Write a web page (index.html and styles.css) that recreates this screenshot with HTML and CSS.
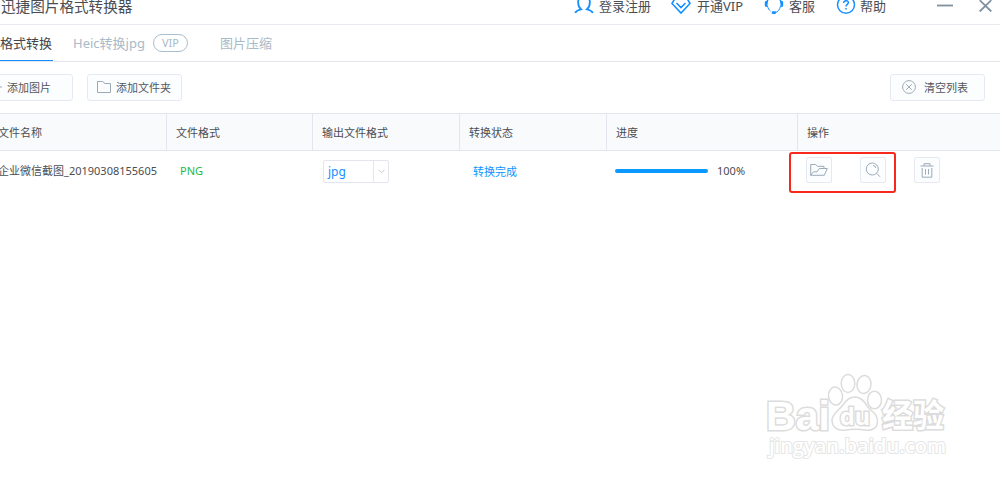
FILE: index.html
```html
<!DOCTYPE html>
<html lang="zh-CN">
<head>
<meta charset="utf-8">
<title>迅捷图片格式转换器</title>
<link rel="stylesheet" href="styles.css">
</head>
<body>
<div class="app">
  <header class="titlebar">
    <h1 class="title">迅捷图片格式转换器</h1>
    <a class="link login"><svg width="20" height="20" viewBox="0 0 20 20"><path d="M1.200 18C2 16 4 15 7 14.300C4.600 12.200 4 9 4.200 6.200C4.500 3 6.800 1.500 10 1.500S15.500 3 15.800 6.200C16 9 15.400 12.200 13 14.300C16 15 18 16 18.800 18"/></svg><span>登录注册</span></a>
    <a class="link vip"><svg width="20" height="20" viewBox="0 0 20 20"><path d="M4.500 2.500H15.500L19 8.500L10 18L1 8.500ZM5.500 8L10 12.500L14.500 8" stroke-width="1.600"/></svg><span>开通VIP</span></a>
    <a class="link service"><svg width="20" height="20" viewBox="0 0 20 20"><path d="M3 8C3 0 17 0 17 8" stroke-width="1.600"/><path d="M3.500 11C4 13.500 5 15 6.500 16M16.500 11C16 14.500 14 17 11 17.600" stroke-width="1"/><path d="M2.200 7.500V10.500M17.800 7.500V10.500M9 17.600H10.800" stroke-width="2.800" stroke-linecap="round"/></svg><span>客服</span></a>
    <a class="link help"><svg width="20" height="20" viewBox="0 0 20 20"><circle cx="10" cy="9.800" r="8.500" stroke-width="1.500"/><path d="M7.600 8C7.600 5 12.400 5 12.400 7.600C12.400 9.500 10 9.300 10 11.600M10 13V14.500" stroke-width="1.500"/></svg><span>帮助</span></a>
    <svg class="minimize" width="16" height="12" viewBox="0 0 16 12"><path d="M0 5.500H16"/></svg>
    <svg class="close" width="13" height="12" viewBox="0 0 13 12"><path d="M.7 .2L12.300 11.500M12.300 .2L.7 11.500"/></svg>
  </header>

  <nav class="tabs">
    <a class="tab active">图片格式转换</a>
    <a class="tab heic">Heic转换jpg</a>
    <span class="badge">VIP</span>
    <a class="tab compress">图片压缩</a>
  </nav>

  <div class="toolbar">
    <button class="button add-image"><svg width="12" height="12" viewBox="0 0 12 12"><path d="M0 6H12M6 0V12"/></svg>添加图片</button>
    <button class="button add-folder"><svg width="14" height="12" viewBox="0 0 14 12"><path d="M.5 11.500V.5H5.500L8 2.500H13.500V11.500Z"/></svg>添加文件夹</button>
    <button class="button clear"><svg width="14" height="14" viewBox="0 0 14 14"><circle cx="7" cy="7" r="6.400"/><path d="M4.200 4.200L9.800 9.800M9.800 4.200L4.200 9.800"/></svg>清空列表</button>
  </div>

  <div class="grid head">
    <div>文件名称</div><div>文件格式</div><div>输出文件格式</div><div>转换状态</div><div>进度</div><div>操作</div>
  </div>
  <div class="grid row">
    <div class="name">企业微信截图_20190308155605</div>
    <div class="format">PNG</div>
    <div class="output"><span class="select"><span>jpg</span><i><svg width="7" height="5" viewBox="0 0 7 5"><path d="M.5 .7L3.500 3.800L6.500 .7"/></svg></i></span></div>
    <div class="status">转换完成</div>
    <div class="progress"><span class="bar"></span><span>100%</span></div>
    <div class="actions">
      <button class="tool"><svg width="18" height="14" viewBox="0 0 18 14"><path d="M.7 12.300V1.500H5.700L7.500 3.300H14V5.500M.7 12.300L3.500 8.800H7L9.300 5.500H17.300L14.300 12.300Z"/></svg></button>
      <button class="tool"><svg width="16" height="16" viewBox="0 0 16 16"><circle cx="7.300" cy="7" r="6"/><path d="M11.700 11.300L15 14.800M8 3.500C9.500 3.600 10.600 4.600 10.700 6"/></svg></button>
      <button class="tool"><svg width="14" height="15" viewBox="0 0 14 15"><path d="M.5 3H13.500M4 3V.7H10V3M2.200 5V14.200H11.800V5M5.500 6V11.500M8.500 6V11.500"/></svg></button>
    </div>
  </div>
  <div class="highlight"></div>
  <svg class="watermark" width="200" height="100" viewBox="0 0 200 100">
    <text x="6" y="60" textLength="64" lengthAdjust="spacingAndGlyphs" class="bai">Bai</text>
    <text x="122" y="57" textLength="62" lengthAdjust="spacingAndGlyphs" class="jingyan">经验</text>
    <g class="paw"><ellipse cx="75.500" cy="26" rx="7" ry="9" transform="rotate(-8 75.500 26)"/><ellipse cx="88" cy="13.500" rx="6.800" ry="9"/><ellipse cx="104" cy="14.500" rx="7" ry="9" transform="rotate(8 104 14.500)"/><ellipse cx="114.500" cy="30" rx="7" ry="8.800"/><path d="M95 27C101 27 104 31 107 36C112 42 118 44 117.500 52C117 59 111 61 105 60C98 59 92 59 86 60C78 61 72 58 72 50C72 44 79 40 83 35C86 30 89 27 95 27Z"/></g>
    <text x="80" y="55" textLength="30" lengthAdjust="spacingAndGlyphs" class="du">du</text>
    <text x="9" y="83" textLength="177" lengthAdjust="spacingAndGlyphs" class="domain">jingyan.baidu.com</text>
  </svg>
</div>
</body>
</html>
```
FILE: styles.css
```css
* { box-sizing: border-box; }
body { margin: 0; overflow: hidden; background: #fff; font-family: "Noto Sans", "Noto Sans CJK SC", sans-serif; font-size: 11px; color: #4a4d52; }
svg { fill: none; stroke: #9babb8; flex: none; display: block; }
.app { position: relative; width: 1000px; height: 481px; overflow: hidden; }
.titlebar { display: flex; align-items: center; height: 25px; padding-bottom: 13px; border-bottom: 1px solid #e9eaf1; white-space: nowrap; line-height: 12px; }
.title { flex: none; width: 574px; margin: 0; padding-left: 1px; font-size: 14.600px; font-weight: 400; line-height: 12px; }
.link { display: flex; flex: none; align-items: center; height: 12px; font-size: 13px; gap: 5px; }
.link svg { margin-top: -2px; stroke: #168fff; stroke-width: 1.800; }
.login { width: 97px; }
.vip { width: 93px; gap: 6px; }
.service { width: 72px; }
.help { width: 101px; gap: 4px; }
.minimize, .close { stroke: #80909d; stroke-width: 1.800; }
.close { margin-left: 26px; }
.tabs { display: flex; align-items: center; height: 37px; border-bottom: 1px solid #e5e7ec; white-space: nowrap; font-size: 13px; color: #a9bac8; }
.tab { height: 36px; line-height: 37px; }
.active { width: 79px; margin-left: -26px; color: #42454a; border-bottom: 1px solid #168fff; }
.heic { width: 80px; margin-left: 20px; }
.badge { width: 35px; height: 18px; border: 1px solid #a9bed0; border-radius: 9px; font-size: 11px; line-height: 16px; text-align: center; }
.compress { margin-left: 32px; }
.toolbar { display: flex; align-items: center; height: 51px; }
.button { display: flex; align-items: center; height: 27px; padding: 0 0 2px; background: #fcfdff; border: 1px solid #e6e9f0; border-radius: 3px; font: inherit; color: #53565b; white-space: nowrap; }
.add-image { width: 93px; margin-left: -20px; padding-left: 9px; gap: 5px; }
.add-folder { width: 95px; margin-left: 14px; padding-left: 9px; gap: 5px; }
.clear { width: 95px; margin: 0 15px 0 auto; padding-left: 11px; gap: 8px; }
.grid { display: grid; grid-template-columns: 167px 146px 147px 147px 191px 1fr; }
.head { height: 38px; background: #f9fafc; border-top: 1px solid #e4e6ed; border-bottom: 1px solid #e4e6ed; }
.head div { padding-left: 9px; line-height: 37px; border-right: 1px solid #e4e6ed; }
.head div:first-child { padding: 0; text-indent: -2px; }
.head div:last-child { border: 0; }
.row { height: 40px; align-items: center; }
.name { padding-bottom: 2px; text-indent: -2px; white-space: nowrap; }
.format { padding: 0 0 1px 13px; color: #25b83e; }
.output { padding-left: 10px; }
.select { display: flex; width: 66px; height: 23px; border: 1px solid #e3e6ef; border-radius: 2px; color: #168fff; line-height: 21px; }
.select span { width: 49px; padding-left: 4px; font-size: 12px; }
.select i { display: grid; place-items: center; flex: 1; border-left: 1px solid #e3e6ef; }
.select svg { stroke: #c5ccd5; }
.status { padding: 0 0 1px 13px; color: #0b95ff; }
.progress { display: flex; align-items: center; gap: 9px; padding-left: 8px; }
.progress span:last-child { margin-top: -1px; }
.bar { width: 93px; height: 4px; border-radius: 2px; background: #0b99ff; }
.actions { display: flex; gap: 28px; padding: 0 0 2px 8px; }
.tool { display: grid; place-items: center; width: 26px; height: 26px; padding: 0; background: #fcfdff; border: 1px solid #e6e9f0; border-radius: 2px; }
.highlight { position: absolute; left: 789px; top: 152px; width: 107px; height: 41px; border: 2px solid #f9281c; border-radius: 3px; }
.watermark { position: absolute; left: 760px; top: 370px; stroke: #dcdcdc; stroke-width: 1.500; fill: #fff; }
.watermark text { font-family: "Open Sans", "Noto Sans CJK SC", sans-serif; font-weight: 700; paint-order: stroke; stroke-width: 3; }
.watermark .bai { font-family: "Liberation Sans", sans-serif; font-size: 41px; }
.jingyan { font-size: 32px; }
.du { font-size: 23px; }
.watermark .domain { font-size: 20px; font-weight: 600; stroke: #e6e6e6; stroke-width: 2; }
```
